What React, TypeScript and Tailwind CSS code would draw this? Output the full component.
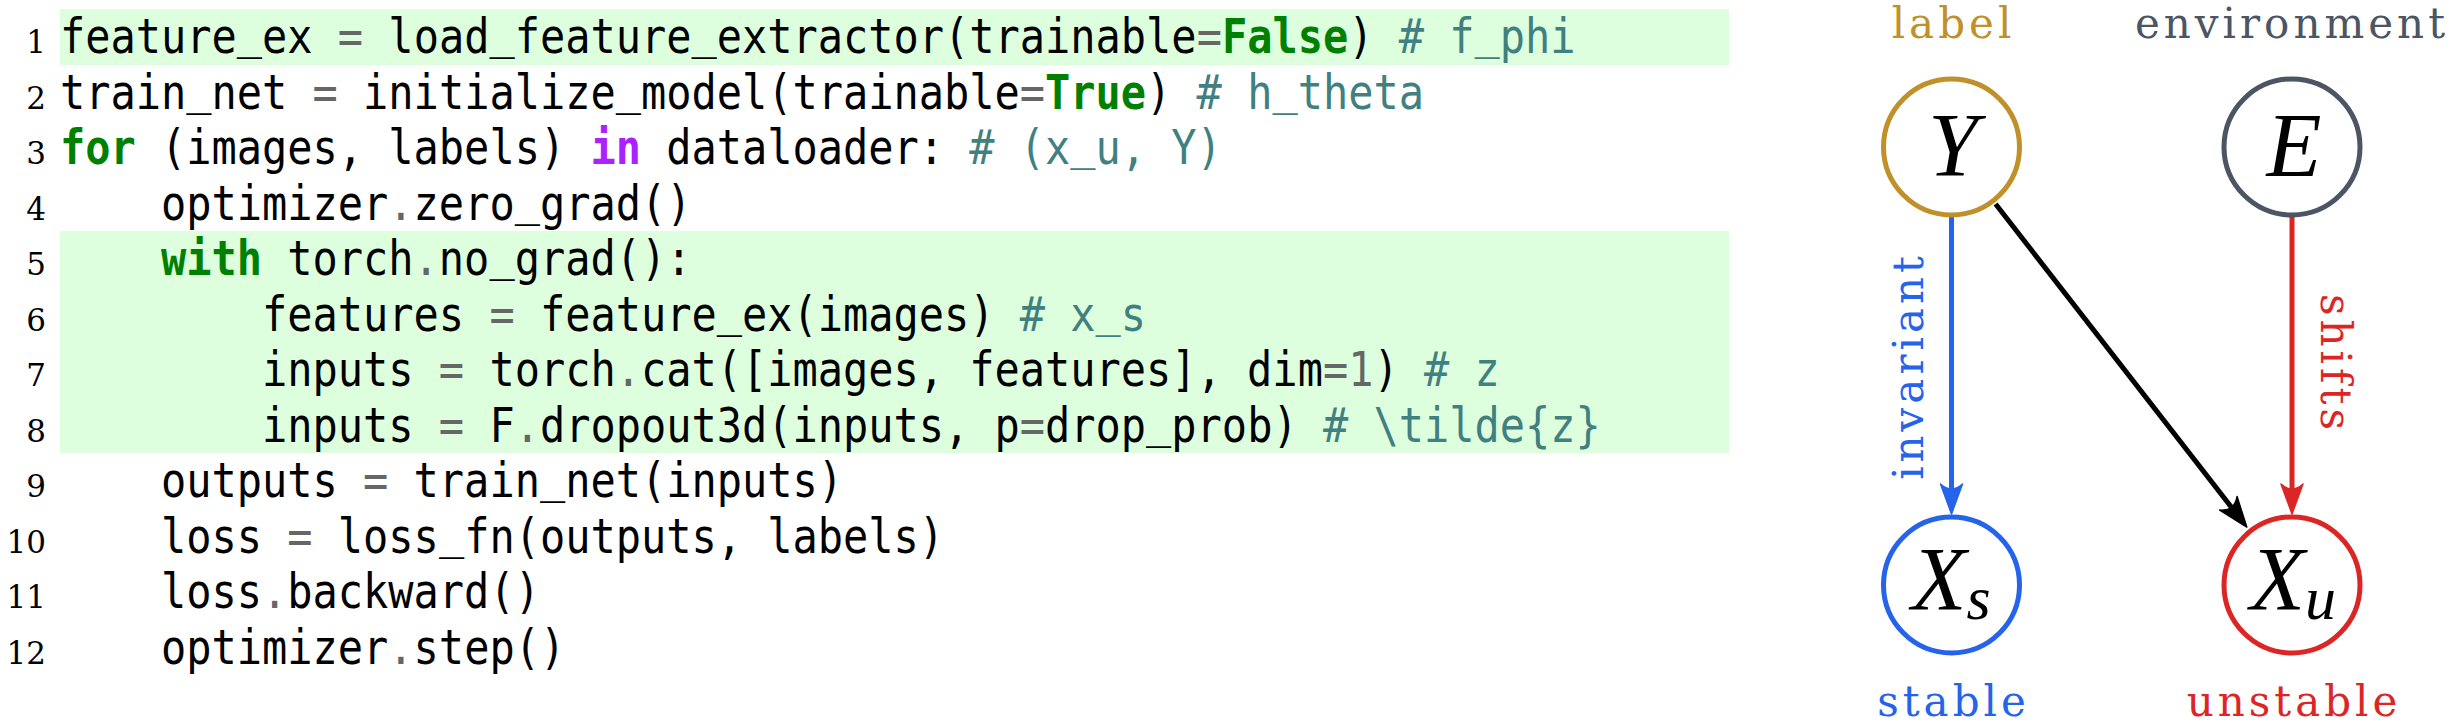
import clsx from "clsx";

// colours used in the listing (pygments-like)
const tokenClass: Record<string, string> = {
  name: "text-black",
  op: "text-[#666666]",
  kw: "font-bold text-[#008000]",
  word: "font-bold text-[#aa22ff]",
  num: "text-[#666666]",
  comment: "text-[#408080]",
};

const code = [
  "feature_ex = load_feature_extractor(trainable=False) # f_phi",
  "train_net = initialize_model(trainable=True) # h_theta",
  "for (images, labels) in dataloader: # (x_u, Y)",
  "    optimizer.zero_grad()",
  "    with torch.no_grad():",
  "        features = feature_ex(images) # x_s",
  "        inputs = torch.cat([images, features], dim=1) # z",
  "        inputs = F.dropout3d(inputs, p=drop_prob) # \\tilde{z}",
  "    outputs = train_net(inputs)",
  "    loss = loss_fn(outputs, labels)",
  "    loss.backward()",
  "    optimizer.step()",
];

const highlighted = [1, 5, 6, 7, 8];

function tokenize(line: string) {
  const re = /(#.*$)|\b(for|with|False|True)\b|\b(in)\b|(=|\.)|\b(\d+)\b/g;
  const out: { text: string; kind: string }[] = [];
  let last = 0;
  let m: RegExpExecArray | null;
  while ((m = re.exec(line)) !== null) {
    if (m.index > last) out.push({ text: line.slice(last, m.index), kind: "name" });
    const kind = m[1] ? "comment" : m[2] ? "kw" : m[3] ? "word" : m[4] ? "op" : "num";
    out.push({ text: m[0], kind });
    last = m.index + m[0].length;
  }
  if (last < line.length) out.push({ text: line.slice(last), kind: "name" });
  return out;
}

// the mono font draws "_" lower than the listing does, lift it a little
function Lifted({ text }: { text: string }) {
  return (
    <>
      {text.split(/(_)/).map((part, i) =>
        part === "_" ? (
          <span key={i} className="relative top-[-5px]">
            _
          </span>
        ) : (
          part
        ),
      )}
    </>
  );
}

function CodeLine({ n, src, hl }: { n: number; src: string; hl: boolean }) {
  return (
    <div className="flex h-[55.5px] items-baseline">
      <span className="w-[46px] shrink-0 text-right font-['DejaVu_Serif',serif] text-[31px] leading-[55.5px] text-black">
        {n}
      </span>
      <div className={clsx("ml-[14px] h-[55.5px] w-[1669px] shrink-0", hl && "bg-[#ddffdd]")}>
        <span className="inline-block origin-left scale-x-[0.874] whitespace-pre font-['DejaVu_Sans_Mono',monospace] text-[48px] leading-[55.5px]">
          {tokenize(src).map((t, i) => (
            <span key={i} className={tokenClass[t.kind]}>
              <Lifted text={t.text} />
            </span>
          ))}
        </span>
      </div>
    </div>
  );
}

function ArrowHead({ x, y, angle, color }: { x: number; y: number; angle: number; color: string }) {
  return (
    <path
      d="M0 0 L-30 -11 Q-20 0 -30 11 Z"
      fill={color}
      stroke={color}
      strokeWidth={1.5}
      strokeLinejoin="round"
      transform={`translate(${x} ${y}) rotate(${angle})`}
    />
  );
}

const GOLD = "#bf9128";
const SLATE = "#4b5563";
const BLUE = "#2563eb";
const RED = "#dc2626";

function CausalGraph() {
  const r = 68;
  const dx = 0.614;
  const dy = 0.789;
  return (
    <svg width={624} height={728} viewBox="0 0 624 728" className="shrink-0">
      {/* labels over / under the nodes */}
      <g className="font-['DejaVu_Serif',serif] text-[42px] tracking-[4px]" textAnchor="middle">
        <text x={123.5} y={38} fill={GOLD}>label</text>
        <text x={462} y={38} fill={SLATE}>environment</text>
        <text x={123.5} y={716} fill={BLUE}>stable</text>
        <text x={464} y={716} fill={RED}>unstable</text>
        <text transform="translate(93 366) rotate(-90)" fill={BLUE}>invariant</text>
        <text transform="translate(491 364) rotate(90)" fill={RED}>shifts</text>
      </g>

      {/* edges */}
      <line x1={121.5} y1={217} x2={121.5} y2={496} stroke={BLUE} strokeWidth={5} />
      <ArrowHead x={121.5} y={514} angle={90} color={BLUE} />
      <line x1={462} y1={217} x2={462} y2={496} stroke={RED} strokeWidth={5} />
      <ArrowHead x={462} y={514} angle={90} color={RED} />
      <line x1={165.6} y1={204} x2={416.8 - 18 * dx} y2={527 - 18 * dy} stroke="#000" strokeWidth={5} />
      <ArrowHead x={416.8} y={527} angle={52.1} color="#000" />

      {/* nodes */}
      <circle cx={121.5} cy={147} r={r} fill="none" stroke={GOLD} strokeWidth={5} />
      <circle cx={462} cy={147} r={r} fill="none" stroke={SLATE} strokeWidth={5} />
      <circle cx={121.5} cy={585} r={r} fill="none" stroke={BLUE} strokeWidth={5} />
      <circle cx={462} cy={585} r={r} fill="none" stroke={RED} strokeWidth={5} />

      <g className="font-['Liberation_Serif',serif] text-[90px] italic" textAnchor="middle" fill="#000">
        <text x={123} y={176}>Y</text>
        <text x={464} y={176}>E</text>
        <text x={121} y={610}>
          X<tspan className="text-[62px]" dy={9}>s</tspan>
        </text>
        <text x={463} y={610}>
          X<tspan className="text-[62px]" dy={9}>u</tspan>
        </text>
      </g>
    </svg>
  );
}

export default function App() {
  return (
    <div className="flex h-[728px] w-[2454px] overflow-hidden bg-white">
      <div className="w-[1830px] shrink-0 pt-[9px]">
        {code.map((src, i) => (
          <CodeLine key={i} n={i + 1} src={src} hl={highlighted.includes(i + 1)} />
        ))}
      </div>
      <CausalGraph />
    </div>
  );
}
